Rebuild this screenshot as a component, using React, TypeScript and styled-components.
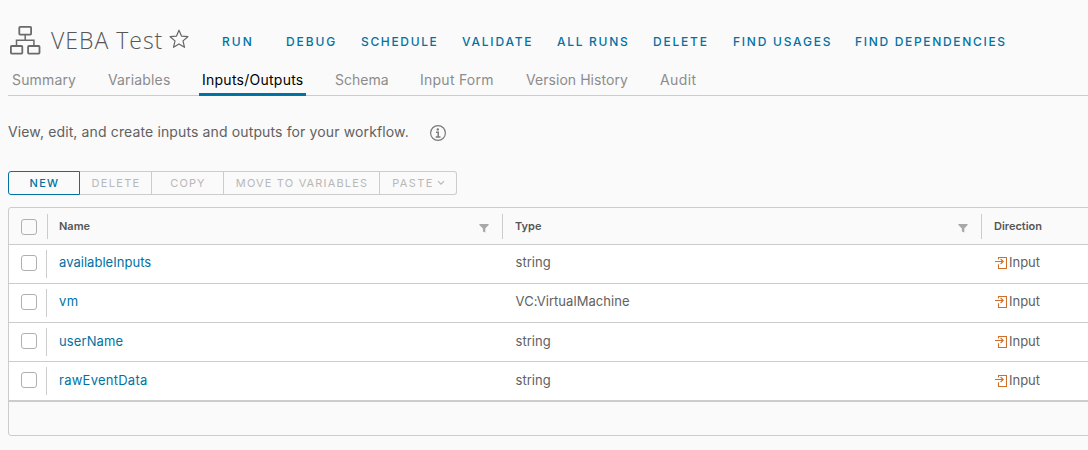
import React from "react";
import styled, { createGlobalStyle } from "styled-components";

const blue = "#0072a3";
const line = "#cccccc";

const GlobalStyle = createGlobalStyle`
  * { box-sizing: border-box; }
  body { margin: 0; background: #fafafa; color: #616161; font-family: Inter, "Liberation Sans", sans-serif; overflow: hidden; }
  button { font-family: inherit; margin: 0; }
  svg { display: block; flex: none; }
`;

const Page = styled.main`
  display: flex;
  flex-direction: column;
  height: 450px;
  padding: 20px 0 0 8px;
  overflow: hidden;
`;

const Header = styled.header`
  display: flex;
  align-items: center;
  height: 40px;
  padding-left: 1px;
`;

const Title = styled.h1`
  width: 118px;
  margin: 0 0 0 10px;
  color: #565656;
  font: 300 23px/40px "Open Sans", sans-serif;
  letter-spacing: 1px;
  white-space: nowrap;
`;

const Actions = styled.nav`
  display: flex;
  padding: 3px 0 0 33px;
`;

const Action = styled.button<{ $width: number; $spacing: number }>`
  width: ${(p) => p.$width}px;
  padding: 0;
  border: 0;
  background: none;
  color: ${blue};
  font-size: 12px;
  font-weight: 450;
  line-height: 24px;
  letter-spacing: ${(p) => p.$spacing}px;
  text-align: left;
  white-space: nowrap;
`;

const Tabs = styled.nav`
  display: flex;
  gap: 23px;
  height: 32px;
  margin-top: 4px;
  box-shadow: inset 0 -1px ${line};
`;

const Tab = styled.button<{ $width: number; $spacing: number; $inset?: number; $active?: boolean }>`
  width: ${(p) => p.$width}px;
  padding: 0 0 0 ${(p) => p.$inset ?? 3}px;
  border: 0;
  background: none;
  color: ${(p) => (p.$active ? "#000" : "#8c8c8c")};
  box-shadow: ${(p) => (p.$active ? `inset 0 -3px ${blue}` : "none")};
  font-size: 14px;
  line-height: 32px;
  letter-spacing: ${(p) => p.$spacing}px;
  text-align: left;
  white-space: nowrap;
`;

const Description = styled.div`
  display: flex;
  align-items: center;
  gap: 21px;
  margin-top: 24px;
  height: 24px;
  font-size: 14px;
  line-height: 24px;
  letter-spacing: 0.13px;

  svg { margin-top: 2px; }
`;

const ButtonGroup = styled.div`
  display: flex;
  margin: 27px 0 12px;
`;

const GroupButton = styled.button<{ $width: number; $spacing: number; $primary?: boolean }>`
  display: flex;
  align-items: center;
  justify-content: center;
  gap: 3px;
  width: ${(p) => p.$width}px;
  height: 24px;
  padding: 0 0 0 1px;
  border: 1px solid ${(p) => (p.$primary ? blue : line)};
  border-left-width: ${(p) => (p.$primary ? 1 : 0)}px;
  background: transparent;
  color: ${(p) => (p.$primary ? blue : "#b8b8b8")};
  font-size: 11px;
  font-weight: ${(p) => (p.$primary ? 500 : 400)};
  letter-spacing: ${(p) => p.$spacing}px;
  white-space: nowrap;

  &:first-child { border-radius: 3px 0 0 3px; }
  &:last-child { border-radius: 0 3px 3px 0; }
`;

const Table = styled.section`
  width: 1100px;
  height: 229px;
  border: 1px solid ${line};
  border-radius: 3px;
`;

const columns = "38px 456px 479px 1fr";

const HeadRow = styled.div`
  display: grid;
  grid-template-columns: ${columns};
  height: 37px;
  border-bottom: 1px solid ${line};
`;

const HeadCell = styled.div<{ $divided?: boolean }>`
  display: flex;
  justify-content: space-between;
  height: 25px;
  margin-top: 6px;
  padding: 0 13px 0 12px;
  border-right: ${(p) => (p.$divided ? `1px solid ${line}` : "0")};
  color: #565656;
  font-size: 11px;
  font-weight: 600;
  line-height: 24px;

  svg { margin-top: 10px; }
`;

const HeadSelect = styled.div`
  height: 25px;
  width: 39px;
  margin-top: 6px;
  padding: 5px 0 0 12px;
  border-right: 1px solid ${line};
`;

const Row = styled.div`
  display: grid;
  grid-template-columns: ${columns};
  height: 39px;
  border-bottom: 1px solid ${line};
  background: #fff;

  &:last-child { height: 40px; border-bottom-width: 2px; }
`;

const SelectCell = styled.div`
  height: 28px;
  margin-top: 5px;
  padding: 5px 0 0 12px;
  border-right: 1px solid ${line};
`;

const Checkbox = styled.span`
  display: block;
  width: 16px;
  height: 16px;
  border: 1px solid #b0b0b0;
  border-radius: 3px;
  background: transparent;
`;

const Cell = styled.div<{ $lower: boolean; $spacing?: number; $link?: boolean }>`
  display: flex;
  padding: ${(p) => (p.$lower ? 1 : 0)}px 0 0 ${(p) => (p.$link ? 12 : 12.6)}px;
  color: ${(p) => (p.$link ? blue : "inherit")};
  font-size: 13px;
  line-height: 35px;
  letter-spacing: ${(p) => p.$spacing ?? 0}px;

  svg { margin: 11px 2px 0 0.4px; }
`;

const WorkflowIcon = () => (
  <svg width="32" height="30" viewBox="0 0 32 30" fill="none" stroke="#6a6a6a" strokeWidth="1.8">
    <rect x="10.3" y="1.9" width="11.8" height="7.7" rx="0.8" />
    <rect x="1.9" y="21" width="11.4" height="7.6" rx="0.8" />
    <rect x="19.1" y="21" width="11.4" height="7.6" rx="0.8" />
    <path d="M16.2 10v5.200M7.500 20.500v-5.300h17.400v5.300" strokeWidth="1.5" />
  </svg>
);

const StarIcon = () => (
  <svg width="20" height="22" viewBox="0 0 20 22" fill="none" stroke="#666" strokeWidth="1.2" strokeLinejoin="round">
    <path d="M10 1.200l2.500 5.900 6.400.6-4.900 4.200 1.500 6.400-5.500-3.400-5.500 3.400L6 11.900 1.100 7.700l6.400-.6z" />
  </svg>
);

const InfoIcon = () => (
  <svg width="16" height="16" viewBox="0 0 16 16" fill="none" stroke="#7a7a7a">
    <circle cx="8" cy="8" r="7.400" strokeWidth="1.200" />
    <circle cx="7.800" cy="4.400" r="1.200" fill="#7a7a7a" stroke="none" />
    <path d="M6 7.200h2.200v4.600M5.700 12h4.800" strokeWidth="1.500" />
  </svg>
);

const FilterIcon = () => (
  <svg width="10" height="9" viewBox="0 0 10 9" fill="#a8a8a8">
    <path d="M.4 0h9.200v1L6.300 4.500V8.600L3.900 7.600V4.500L.4 1z" />
  </svg>
);

const CaretIcon = () => (
  <svg width="8" height="6" viewBox="0 0 8 6" fill="none" stroke="#b8b8b8" strokeWidth="1.200">
    <path d="M1 1.200l3 3 3-3" />
  </svg>
);

const InputIcon = () => (
  <svg width="12" height="14" viewBox="0 0 12 14" fill="none" stroke="#cf6f2c" strokeWidth="1.100">
    <path d="M3.500 3.400V1.500h8v11h-8V8.300M0 5.500h8M5.600 3l2.600 2.500L5.600 8" />
  </svg>
);

const actions: [string, number, number][] = [
  ["RUN", 64, 2],
  ["DEBUG", 75, 1.9],
  ["SCHEDULE", 101, 1.65],
  ["VALIDATE", 95, 1.8],
  ["ALL RUNS", 96, 1.7],
  ["DELETE", 80, 1.8],
  ["FIND USAGES", 122, 1.75],
  ["FIND DEPENDENCIES", 160, 1.68],
];

const tabs: [string, number, number, number?][] = [
  ["Summary", 73, 0.15, 4],
  ["Variables", 72, 0.15, 4],
  ["Inputs/Outputs", 107, 0.25],
  ["Schema", 62, 0, 6],
  ["Input Form", 83, 0.25, 6],
  ["Version History", 111, 0.05, 6],
  ["Audit", 50, 0.4, 6],
];

const rows: [string, number, string, number][] = [
  ["availableInputs", 0.03, "string", 0],
  ["vm", 0.4, "VC:VirtualMachine", 0.05],
  ["userName", 0.1, "string", 0],
  ["rawEventData", 0.25, "string", 0],
];

export default function App() {
  return (
    <Page>
      <GlobalStyle />
      <Header>
        <WorkflowIcon />
        <Title>VEBA Test</Title>
        <StarIcon />
        <Actions>
          {actions.map(([label, width, spacing]) => (
            <Action key={label} $width={width} $spacing={spacing}>{label}</Action>
          ))}
        </Actions>
      </Header>
      <Tabs>
        {tabs.map(([label, width, spacing, inset]) => (
          <Tab key={label} $width={width} $spacing={spacing} $inset={inset} $active={label === "Inputs/Outputs"}>{label}</Tab>
        ))}
      </Tabs>
      <Description>
        View, edit, and create inputs and outputs for your workflow.
        <InfoIcon />
      </Description>
      <ButtonGroup>
        <GroupButton $width={72} $spacing={1.3} $primary>NEW</GroupButton>
        <GroupButton $width={72} $spacing={1.3}>DELETE</GroupButton>
        <GroupButton $width={72} $spacing={1.100}>COPY</GroupButton>
        <GroupButton $width={156} $spacing={1.16}>MOVE TO VARIABLES</GroupButton>
        <GroupButton $width={77} $spacing={1.4}>PASTE<CaretIcon /></GroupButton>
      </ButtonGroup>
      <Table>
        <HeadRow>
          <HeadSelect><Checkbox /></HeadSelect>
          <HeadCell $divided>Name<FilterIcon /></HeadCell>
          <HeadCell $divided>Type<FilterIcon /></HeadCell>
          <HeadCell>Direction</HeadCell>
        </HeadRow>
        <div>
          {rows.map(([name, nameSpacing, type, typeSpacing], i) => (
            <Row key={name}>
              <SelectCell><Checkbox /></SelectCell>
              <Cell $lower={i > 1} $spacing={nameSpacing} $link>{name}</Cell>
              <Cell $lower={i > 1} $spacing={typeSpacing}>{type}</Cell>
              <Cell $lower={i > 1}><InputIcon />Input</Cell>
            </Row>
          ))}
        </div>
      </Table>
    </Page>
  );
}
